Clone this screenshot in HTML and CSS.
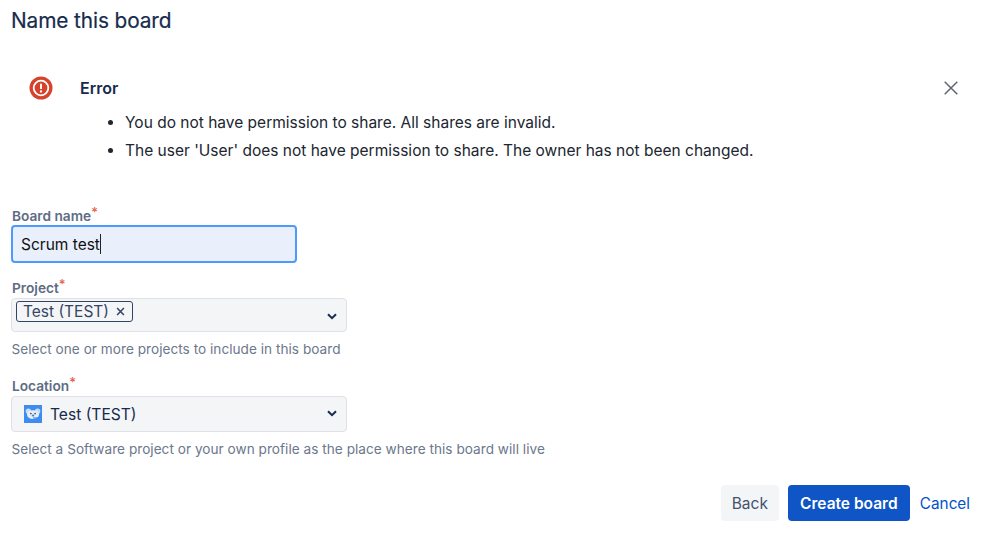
FILE: index.html
```html
<!DOCTYPE html>
<html lang="en">
<head>
<meta charset="utf-8">
<title>Name this board</title>
<link rel="stylesheet" href="styles.css">
</head>
<body>
<h1 class="title">Name this board</h1>
<section class="flag">
  <svg class="flag-icon" width="24" height="24" viewBox="0 0 24 24"><circle cx="12" cy="12" r="11.5" fill="#d5432a"/><circle cx="12" cy="12" r="7.3" fill="none" stroke="#fff" stroke-width="1.8"/><rect x="11" y="7.5" width="2" height="5.8" rx="1" fill="#fff"/><circle cx="12" cy="15.5" r="1.15" fill="#fff"/></svg>
  <div class="flag-body">
    <h2 class="flag-title">Error</h2>
    <ul class="flag-list">
      <li>You do not have permission to share. All shares are invalid.</li>
      <li>The user 'User' does not have permission to share. The owner has not been changed.</li>
    </ul>
  </div>
  <svg class="flag-close" width="14" height="14" viewBox="0 0 14 14"><path d="M.7.7L13.3 13.3M13.3.7L.7 13.3" stroke="#5e6673" stroke-width="1.5" fill="none"/></svg>
</section>
<form class="form">
  <div class="field field-name">
    <label class="label">Board name<span class="req">*</span></label>
    <div class="input"><span>Scrum test</span><i class="caret"></i></div>
  </div>
  <div class="field field-project">
    <label class="label">Project<span class="req">*</span></label>
    <div class="select select-multi">
      <span class="tag">Test (TEST)<svg width="9" height="9" viewBox="0 0 10 10"><path d="M1.2 1.2L8.8 8.8M8.8 1.2L1.2 8.8" stroke="#344563" stroke-width="1.7" fill="none"/></svg></span>
      <svg class="chev" width="10" height="7" viewBox="0 0 10 7"><path d="M1 1.2L5 5.2L9 1.2" stroke="#172b4d" stroke-width="2" fill="none"/></svg>
    </div>
    <p class="help">Select one or more projects to include in this board</p>
  </div>
  <div class="field field-location">
    <label class="label">Location<span class="req">*</span></label>
    <div class="select select-single">
      <svg class="avatar" width="18" height="18" viewBox="0 0 18 18"><rect width="18" height="18" fill="#3f8cf0"/><circle cx="4.4" cy="6.2" r="2.7" fill="#c9dcf3"/><circle cx="13.6" cy="6.2" r="2.7" fill="#c9dcf3"/><ellipse cx="9" cy="9.6" rx="6" ry="4.4" fill="#e6eff9"/><circle cx="6.9" cy="8.6" r=".8" fill="#253858"/><circle cx="11.1" cy="8.6" r=".8" fill="#253858"/><ellipse cx="9" cy="10.6" rx="1.3" ry="1" fill="#5a7fa8"/><path d="M9 13h5" stroke="#3f8cf0" stroke-width="1.2"/></svg>
      <span>Test (TEST)</span>
      <svg class="chev" width="10" height="7" viewBox="0 0 10 7"><path d="M1 1.2L5 5.2L9 1.2" stroke="#172b4d" stroke-width="2" fill="none"/></svg>
    </div>
    <p class="help">Select a Software project or your own profile as the place where this board will live</p>
  </div>
  <div class="actions">
    <button type="button" class="btn btn-back">Back</button>
    <button type="button" class="btn btn-primary">Create board</button>
    <a class="cancel" href="#">Cancel</a>
  </div>
</form>
</body>
</html>
```
FILE: styles.css
```css
* { box-sizing: border-box; }
html, body { margin: 0; height: 534px; overflow: hidden; background: #fff; }
body { padding: 0 28px 0 11px; font-family: Inter, "Liberation Sans", sans-serif; color: #172b4d; }
.title { margin: 0; padding-top: 8px; font-size: 20.8px; line-height: 26px; font-weight: 400; color: #172b4d; letter-spacing: -0.1px; -webkit-text-stroke: 0.2px #172b4d; }
.flag { display: flex; margin-top: 42px; padding-left: 18px; }
.flag-icon { flex: none; }
.flag-body { flex: 1; padding-left: 27px; }
.flag-title { margin: 0; font-size: 16px; line-height: 24px; font-weight: 600; }
.flag-list { margin: 11px 0 0; padding-left: 45px; font-size: 15.5px; line-height: 24px; color: #20262f; }
.flag-list li + li { margin-top: 4px; }
.flag-close { flex: none; margin: 5px 12px 0 0; }
.form { margin-top: 45px; }
.label { display: block; padding-left: 1px; font-size: 13.7px; line-height: 17px; font-weight: 600; color: #5e6c84; }
.req { color: #e5604a; position: relative; top: -4px; font-size: 13px; font-weight: 500; }
.input { display: flex; align-items: center; width: 286px; height: 38px; padding-left: 8px; background: #e9f0fc; border: 2px solid #4c9aff; border-radius: 4px; font-size: 15.5px; color: #111; }
.caret { display: block; width: 1.5px; height: 20px; background: #222; }
.field-project { margin-top: 17px; }
.field-location { margin-top: 20px; }
.select { display: flex; position: relative; width: 336px; margin-top: 1px; background: #f4f5f7; border: 1px solid #dfe1e6; border-radius: 4px; }
.select-multi { height: 34px; padding: 2px 0 0 4px; }
.select-single { height: 36px; padding-left: 12px; align-items: center; font-size: 15.6px; }
.tag { display: inline-flex; align-items: center; gap: 7px; height: 21px; padding: 0 7px 0 6px; border: 1px solid #344563; border-radius: 3px; font-size: 15.5px; color: #344563; }
.chev { position: absolute; right: 9px; bottom: 11px; }
.select-single .chev { bottom: 14px; }
.avatar { flex: none; margin-right: 8px; }
.help { margin: 8px 0 0; padding-left: 0.5px; font-size: 13.6px; letter-spacing: 0.03px; line-height: 18px; color: #6b778c; }
.actions { display: flex; justify-content: flex-end; align-items: center; margin-top: 27px; }
.btn { height: 36px; border: 0; border-radius: 4px; font: inherit; font-size: 15.5px; }
.btn-back { width: 58px; background: #f4f5f7; color: #42526e; }
.btn-primary { width: 122px; margin-left: 9px; background: #0f55c5; color: #fff; font-weight: 600; }
.cancel { margin-left: 10px; font-size: 15.3px; color: #0052cc; text-decoration: none; }
```
